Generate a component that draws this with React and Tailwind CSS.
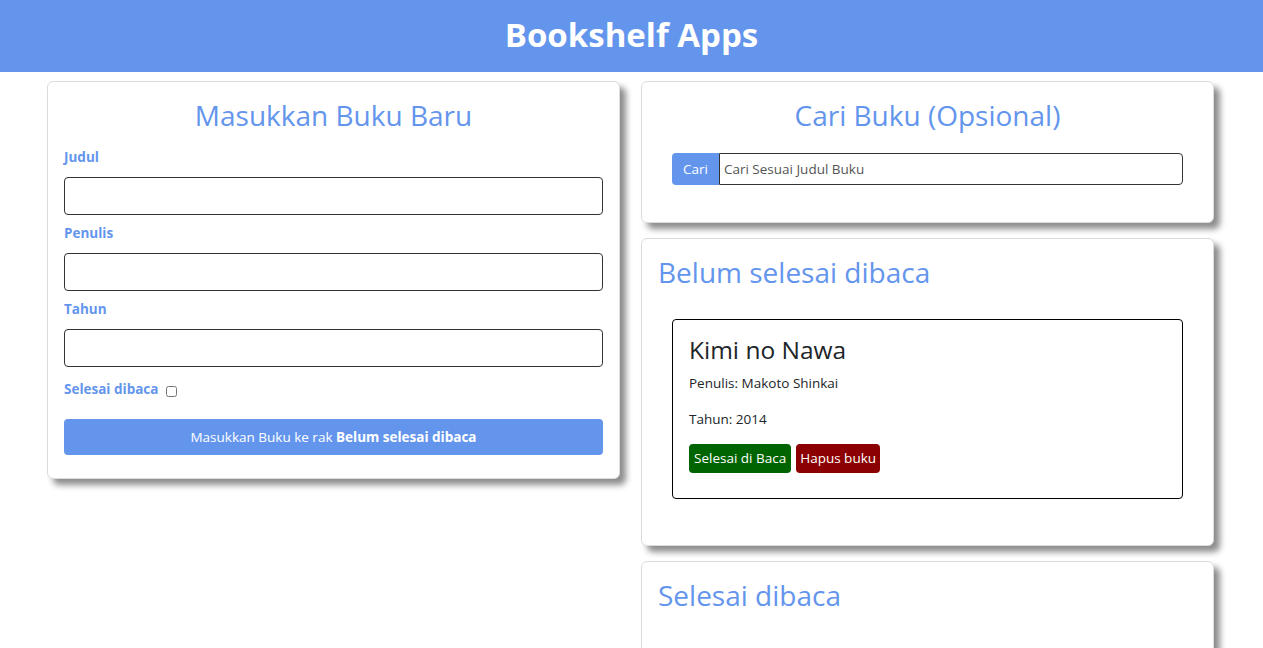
import React from 'react';

const font = { fontFamily: '"Open Sans", "Noto Sans", sans-serif' };

const Card = ({ children, className = '' }) => (
  <section
    className={`min-w-0 rounded-md border border-[#dcdcdc] bg-white p-4 shadow-[6px_6px_6px_rgba(0,0,0,0.45)] ${className}`}
  >
    {children}
  </section>
);

const Field = ({ label, id }) => (
  <div className="mb-2">
    <label htmlFor={id} className="mb-[10px] block text-[13.5px] font-bold leading-5 text-[#6495ed]">
      {label}
    </label>
    <input
      id={id}
      type="text"
      className="block h-[38px] w-full rounded border border-[#333] px-3 text-sm outline-none"
    />
  </div>
);

const BookItem = ({ title, author, year }) => (
  <article className="mx-[14px] mt-[30px] rounded border border-black px-4 pt-3 pb-[25px]">
    <h3 className="text-[24.5px] leading-[36px] text-[#212529]">{title}</h3>
    <p className="mt-[5px] text-[13.5px] leading-5 text-[#212529]">Penulis: {author}</p>
    <p className="mt-4 text-[13.5px] leading-5 text-[#212529]">Tahun: {year}</p>
    <div className="mt-[15px] flex gap-[5px]">
      <button className="h-[29px] rounded bg-[#006400] px-[5px] text-[13.5px] text-white">
        Selesai di Baca
      </button>
      <button className="h-[29px] rounded bg-[#8b0000] px-[4px] text-[13.5px] text-white">
        Hapus buku
      </button>
    </div>
  </article>
);

export default function App() {
  return (
    <div className="min-h-screen bg-white text-[#212529]" style={font}>
      <header className="flex h-[72px] items-center justify-center bg-[#6495ed] pb-[3px]">
        <h1 className="text-[33px] font-bold leading-10 text-white">Bookshelf Apps</h1>
      </header>

      <main className="grid grid-cols-[minmax(0,1fr)_minmax(0,1fr)] items-start gap-[21px] pl-[47px] pr-[49px] pt-[9px]">
        {/* Form tambah buku */}
        <Card>
          <h2 className="mb-[15px] text-center text-[28px] leading-[34px] text-[#6495ed]">
            Masukkan Buku Baru
          </h2>
          <form onSubmit={(e) => e.preventDefault()}>
            <Field label="Judul" id="inputBookTitle" />
            <Field label="Penulis" id="inputBookAuthor" />
            <Field label="Tahun" id="inputBookYear" />
            <div className="mt-3 flex items-center gap-2">
              <label htmlFor="inputBookIsComplete" className="text-[13.5px] font-bold leading-5 text-[#6495ed]">
                Selesai dibaca
              </label>
              <input id="inputBookIsComplete" type="checkbox" className="mt-[5px] h-[11px] w-[11px]" />
            </div>
            <button
              type="submit"
              className="mt-[20px] mb-[7px] h-9 w-full rounded bg-[#6495ed] text-[13.5px] text-white"
            >
              Masukkan Buku ke rak <b>Belum selesai dibaca</b>
            </button>
          </form>
        </Card>

        <div className="flex min-w-0 flex-col gap-[15px]">
          {/* Pencarian */}
          <Card className="pb-[37px]">
            <h2 className="mb-[21px] text-center text-[28px] leading-[34px] text-[#6495ed]">
              Cari Buku (Opsional)
            </h2>
            <div className="mx-[14px] flex h-8">
              <span className="flex items-center rounded-l bg-[#6495ed] px-[11px] text-[13.5px] text-white">
                Cari
              </span>
              <input
                type="text"
                placeholder="Cari Sesuai Judul Buku"
                className="min-w-0 flex-1 rounded-r border border-[#333] px-1 text-[13.5px] outline-none placeholder:text-[#555]"
              />
            </div>
          </Card>

          {/* Rak belum selesai */}
          <Card className="pb-[46px]">
            <h2 className="text-[28px] leading-[34px] text-[#6495ed]">Belum selesai dibaca</h2>
            <BookItem title="Kimi no Nawa" author="Makoto Shinkai" year="2014" />
          </Card>

          {/* Rak selesai */}
          <Card className="min-h-[120px]">
            <h2 className="text-[28px] leading-[34px] text-[#6495ed]">Selesai dibaca</h2>
          </Card>
        </div>
      </main>
    </div>
  );
}
